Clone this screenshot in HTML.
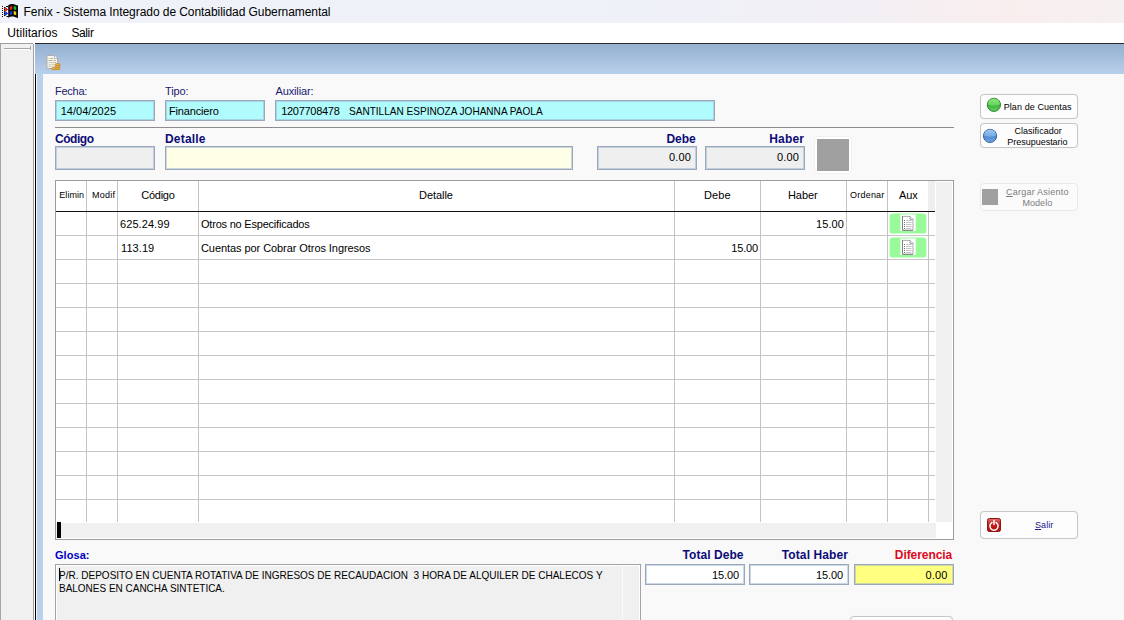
<!DOCTYPE html>
<html lang="es">
<head>
<meta charset="utf-8">
<title>Fenix - Sistema Integrado de Contabilidad Gubernamental</title>
<style>
*{box-sizing:border-box;margin:0;padding:0}
html,body{width:1124px;height:620px;overflow:hidden;background:#f9f9f9}
body{position:relative;font-family:"Liberation Sans",sans-serif;font-size:11px;color:#000}
.abs{position:absolute}
.t{white-space:nowrap;line-height:13px;font-size:11px}
#titlebar{left:0;top:0;width:1124px;height:23px;background:linear-gradient(90deg,#eff2f9 0%,#eff1f8 58%,#f2eff5 76%,#f9eeee 90%,#f6f0f1 100%)}
#menubar{left:0;top:23px;width:1124px;height:20px;background:#fff}
.f12{font-size:12px;line-height:15px}
#mdiline{left:0;top:43px;width:1124px;height:1px;background:linear-gradient(90deg,#a0a0a0 33px,#fff 33px,#fff 35px,#2b2b2b 35px)}
#leftpanel{left:0;top:44px;width:33px;height:576px;background:#f0f0f0;border-left:1px solid #a6a6a6}
#leftsep{left:4px;top:46px;width:27px;height:4px;border-right:1px solid #a8a8a8;background:linear-gradient(180deg,#f0f0f0 2px,#a6a6a6 2px,#a6a6a6 3px,#fff 3px)}
#leftedge{left:33px;top:44px;width:2px;height:576px;background:linear-gradient(90deg,#a0a0a0 50%,#fff 50%)}
#header{left:35px;top:44px;width:1089px;height:30px;background:linear-gradient(180deg,#95b0d0 0%,#a6bfdd 50%,#b5c9e5 80%,#b3d0ea 100%)}
#blueborder{left:35px;top:74px;width:8px;height:546px;background:#b9d1ea}
#blackline{left:35px;top:74px;width:2px;height:546px;background:linear-gradient(90deg,#000 50%,#f2f6fb 50%)}
#form{left:43px;top:74px;width:1081px;height:546px;background:#f9f9f9}
.lbl{color:#1a1a6e}
.lblb{font-weight:bold;color:#0c0c78;font-size:12px}
.fld{border:1px solid #9ca8b9;box-shadow:inset 0 0 0 1px rgba(150,175,205,.5)}
.cyan{background:#b0fbfb}
.gray{background:#efefef}
.white{background:#fff}
#hr{left:55px;top:127px;width:899px;height:1px;background:#8c8c8c}
#gridframe{left:55px;top:180px;width:899px;height:360px;border:1px solid #9c9c9c;background:#fff}
#vscroll{left:936px;top:182px;width:16px;height:340px;background:#f0f0f0}
#hscroll{left:56px;top:523px;width:880px;height:15px;background:#f0f0f0}
#marker{left:57px;top:522px;width:4px;height:16px;background:#000}
.vl{width:1px;top:181px;height:341px;background:#c3c3c3}
.hl{left:56px;width:879px;height:1px;background:#c5c5c5}
#hdrline{left:56px;top:211px;width:879px;height:1px;background:#111}
#hdrpad{left:928px;top:181px;width:7px;height:30px;background:#eeeeee}
.auxbtn{left:889.2px;width:37.3px;height:20.4px;background:#98fa98;border-radius:3.5px}
#glosa{left:55px;top:564px;width:586px;height:60px;border:1px solid #a3a3a3;background:#f0f0f0;box-shadow:inset 0 0 0 1px #fff}
#glosasep{left:622px;top:566px;width:1px;height:54px;background:#fafafa}
#caret{left:59px;top:568px;width:1px;height:13px;background:#000}
.btn{left:980px;width:98px;border:1px solid #c6c6c6;border-radius:4px;background:#fdfdfd;box-shadow:0 0 1px #e4e4e4}
.bt{font-size:9px;line-height:11px}
</style>
</head>
<body>
<div id="titlebar" class="abs"></div>
<div id="menubar" class="abs"></div>
<div class="abs t f12" id="t0" style="top:5px;letter-spacing:-0.06px;left:23.6px;">Fenix - Sistema Integrado de Contabilidad Gubernamental</div>
<div class="abs t f12" id="t1" style="top:26px;letter-spacing:0.08px;left:7.3px;">Utilitarios</div>
<div class="abs t f12" id="t2" style="top:26px;letter-spacing:-0.38px;left:71.4px;">Salir</div>
<div id="mdiline" class="abs"></div>
<div id="leftpanel" class="abs"></div>
<div id="leftsep" class="abs"></div>
<div id="leftedge" class="abs"></div>
<div id="header" class="abs"></div>
<div id="blueborder" class="abs"></div>
<div id="blackline" class="abs"></div>
<div id="form" class="abs"></div>
<div class="abs t lbl" id="t3" style="top:85px;letter-spacing:-0.24px;left:55px;">Fecha:</div>
<div class="abs t lbl" id="t4" style="top:85px;letter-spacing:-0.15px;left:165.1px;">Tipo:</div>
<div class="abs t lbl" id="t5" style="top:85px;letter-spacing:-0.14px;left:275.5px;">Auxiliar:</div>
<div class="abs fld cyan" style="left:55px;top:100px;width:100px;height:21px"></div>
<div class="abs fld cyan" style="left:165px;top:100px;width:100px;height:21px"></div>
<div class="abs fld cyan" style="left:275px;top:100px;width:440px;height:21px"></div>
<div class="abs t " id="t6" style="top:105px;letter-spacing:0.03px;left:60.7px;">14/04/2025</div>
<div class="abs t " id="t7" style="top:105px;letter-spacing:-0.16px;left:169px;">Financiero</div>
<div class="abs t " id="t8" style="top:105px;letter-spacing:-0.29px;left:281.2px;">1207708478</div>
<div class="abs t " id="t9" style="top:105px;transform:scaleX(0.9135);transform-origin:0 0;left:348.7px;">SANTILLAN ESPINOZA JOHANNA PAOLA</div>
<div id="hr" class="abs"></div>
<div class="abs t lblb" id="t10" style="top:133px;letter-spacing:-0.47px;left:55px;">Código</div>
<div class="abs t lblb" id="t11" style="top:133px;letter-spacing:0.18px;left:165px;">Detalle</div>
<div class="abs t lblb" id="t12" style="top:133px;letter-spacing:-0.01px;left:666.4px;">Debe</div>
<div class="abs t lblb" id="t13" style="top:133px;letter-spacing:0.16px;left:769.3px;">Haber</div>
<div class="abs fld gray" style="left:55px;top:146px;width:100px;height:24px"></div>
<div class="abs fld" style="left:165px;top:146px;width:408px;height:24px;background:#ffffe8"></div>
<div class="abs fld gray" style="left:597px;top:146px;width:100px;height:24px"></div>
<div class="abs fld gray" style="left:705px;top:146px;width:100px;height:24px"></div>
<div class="abs t " id="t14" style="top:151px;letter-spacing:0.14px;left:669px;">0.00</div>
<div class="abs t " id="t15" style="top:151px;letter-spacing:0.14px;left:777px;">0.00</div>
<div class="abs" style="left:814px;top:136px;width:38px;height:38px;background:#fff;border:1px solid #f1f1f1;border-radius:4px"></div>
<div class="abs" style="left:817px;top:139px;width:32px;height:32px;background:#a0a0a0"></div>
<div id="gridframe" class="abs"></div>
<div id="hdrpad" class="abs"></div>
<div id="vscroll" class="abs"></div>
<div id="hscroll" class="abs"></div>
<div id="marker" class="abs"></div>
<div class="abs vl" style="left:86px"></div>
<div class="abs vl" style="left:117px"></div>
<div class="abs vl" style="left:198px"></div>
<div class="abs vl" style="left:674px"></div>
<div class="abs vl" style="left:760px"></div>
<div class="abs vl" style="left:846px"></div>
<div class="abs vl" style="left:887px"></div>
<div class="abs vl" style="left:928px;top:212px;height:310px"></div>
<div class="abs hl" style="top:235px"></div>
<div class="abs hl" style="top:259px"></div>
<div class="abs hl" style="top:283px"></div>
<div class="abs hl" style="top:307px"></div>
<div class="abs hl" style="top:331px"></div>
<div class="abs hl" style="top:355px"></div>
<div class="abs hl" style="top:379px"></div>
<div class="abs hl" style="top:403px"></div>
<div class="abs hl" style="top:427px"></div>
<div class="abs hl" style="top:451px"></div>
<div class="abs hl" style="top:475px"></div>
<div class="abs hl" style="top:499px"></div>
<div id="hdrline" class="abs"></div>
<div class="abs t " id="t16" style="top:189px;font-size:9px;letter-spacing:0.06px;left:59.3px;">Elimin</div>
<div class="abs t " id="t17" style="top:189px;font-size:9px;letter-spacing:0.22px;left:92px;">Modif</div>
<div class="abs t " id="t18" style="top:189px;letter-spacing:-0.24px;left:141.2px;">Código</div>
<div class="abs t " id="t19" style="top:189px;letter-spacing:-0.05px;left:419px;">Detalle</div>
<div class="abs t " id="t20" style="top:189px;letter-spacing:0.08px;left:704px;">Debe</div>
<div class="abs t " id="t21" style="top:189px;letter-spacing:-0.07px;left:788px;">Haber</div>
<div class="abs t " id="t22" style="top:189px;font-size:9px;letter-spacing:0.22px;left:850px;">Ordenar</div>
<div class="abs t " id="t23" style="top:189px;letter-spacing:-0.12px;left:899px;">Aux</div>
<div class="abs t " id="t24" style="top:218px;letter-spacing:0.07px;left:120px;">625.24.99</div>
<div class="abs t " id="t25" style="top:218px;letter-spacing:-0.21px;left:201px;">Otros no Especificados</div>
<div class="abs t " id="t26" style="top:218px;letter-spacing:0.09px;left:816px;">15.00</div>
<div class="abs t " id="t27" style="top:242px;letter-spacing:0.08px;left:121px;">113.19</div>
<div class="abs t " id="t28" style="top:242px;letter-spacing:-0.07px;left:201px;">Cuentas por Cobrar Otros Ingresos</div>
<div class="abs t " id="t29" style="top:242px;letter-spacing:-0.19px;left:731.3px;">15.00</div>
<svg class="abs" style="left:888px;top:212px" width="40" height="23" viewBox="0 0 40 23"><rect x="1.600" y="1.400" width="36.800" height="20.200" rx="3.200" fill="#98fa98"/><rect x="12.400" y="2.500" width="15.400" height="16.500" fill="#fff"/><path d="M14.500 4.400h7.500l3 3v10.900h-10.500z" fill="#fff" stroke="#a2a2a2" stroke-width="0.900"/><path d="M14.500 4.400v13.900h10.500" fill="none" stroke="#7c7c7c" stroke-width="0.900"/><path d="M22 4.400v3h3" fill="#f4f4f4" stroke="#909090" stroke-width="0.800"/><path d="M18 8.500h5.600M18 10.500h5.600M18 12.500h5.600M18 14.500h5.600M18 16.500h5.600" stroke="#c8c8c8"/><path d="M16 8.500h1M16 10.500h1M16 12.500h1M16 14.500h1M16 16.500h1" stroke="#707070"/></svg>
<svg class="abs" style="left:888px;top:236px" width="40" height="23" viewBox="0 0 40 23"><rect x="1.600" y="1.400" width="36.800" height="20.200" rx="3.200" fill="#98fa98"/><rect x="12.400" y="2.500" width="15.400" height="16.500" fill="#fff"/><path d="M14.500 4.400h7.500l3 3v10.900h-10.500z" fill="#fff" stroke="#a2a2a2" stroke-width="0.900"/><path d="M14.500 4.400v13.900h10.500" fill="none" stroke="#7c7c7c" stroke-width="0.900"/><path d="M22 4.400v3h3" fill="#f4f4f4" stroke="#909090" stroke-width="0.800"/><path d="M18 8.500h5.600M18 10.500h5.600M18 12.500h5.600M18 14.500h5.600M18 16.500h5.600" stroke="#c8c8c8"/><path d="M16 8.500h1M16 10.500h1M16 12.500h1M16 14.500h1M16 16.500h1" stroke="#707070"/></svg>
<div class="abs t lblb" id="t30" style="top:549px;font-size:11px;letter-spacing:0.06px;left:55px;color:#0000c8">Glosa:</div>
<div id="glosa" class="abs"></div><div id="glosasep" class="abs"></div>
<div class="abs t " id="t31" style="top:569px;transform:scaleX(0.9102);transform-origin:0 0;left:59.3px;">P/R. DEPOSITO EN CUENTA ROTATIVA DE INGRESOS DE RECAUDACION&nbsp; 3 HORA DE ALQUILER DE CHALECOS Y</div>
<div class="abs t " id="t32" style="top:582px;transform:scaleX(0.9072);transform-origin:0 0;left:59.3px;">BALONES EN CANCHA SINTETICA.</div>
<div id="caret" class="abs"></div>
<div class="abs t lblb" id="t33" style="top:549px;letter-spacing:0.06px;left:682.5px;">Total Debe</div>
<div class="abs t lblb" id="t34" style="top:549px;letter-spacing:0.10px;left:781.8px;">Total Haber</div>
<div class="abs t lblb" id="t35" style="top:549px;letter-spacing:-0.07px;left:894.8px;color:#dc0a1e">Diferencia</div>
<div class="abs fld white" style="left:645px;top:564px;width:100px;height:21px"></div>
<div class="abs fld white" style="left:749px;top:564px;width:100px;height:21px"></div>
<div class="abs fld" style="left:854px;top:564px;width:100px;height:21px;background:#ffff80"></div>
<div class="abs t " id="t36" style="top:569px;letter-spacing:-0.09px;left:712px;">15.00</div>
<div class="abs t " id="t37" style="top:569px;letter-spacing:-0.09px;left:816px;">15.00</div>
<div class="abs t " id="t38" style="top:569px;letter-spacing:0.17px;left:925.5px;">0.00</div>
<div class="abs btn" style="left:850px;width:103px;top:616px;height:20px"></div>
<div class="abs btn" style="top:94px;height:25px"></div>
<svg class="abs" style="left:984px;top:95px" width="18" height="18" viewBox="0 0 18 18"><defs><linearGradient id="gga" x1="0" y1="0" x2="0" y2="1"><stop offset="0" stop-color="#8ce67c"/><stop offset="1" stop-color="#62d258"/></linearGradient><linearGradient id="ggb" x1="0" y1="0" x2="0" y2="1"><stop offset="0.4" stop-color="#36a83a"/><stop offset="1" stop-color="#62d258"/></linearGradient></defs><g transform="translate(9.90 9.80)"><circle cx="0" cy="0" r="6.600" fill="url(#ggb)" stroke="#2a8230" stroke-width="1"/><path d="M-6.100 -0.300A6.100 6.100 0 0 1 6.100 -0.300Q0 2.200 -6.100 -0.300z" fill="url(#gga)"/></g></svg>
<div class="abs t bt" id="t39" style="top:102px;letter-spacing:0.09px;left:1003.7px;">Plan de Cuentas</div>
<div class="abs btn" style="top:123px;height:25px"></div>
<svg class="abs" style="left:981px;top:126px" width="18" height="18" viewBox="0 0 18 18"><defs><linearGradient id="gba" x1="0" y1="0" x2="0" y2="1"><stop offset="0" stop-color="#9ec8f4"/><stop offset="1" stop-color="#72a8e4"/></linearGradient><linearGradient id="gbb" x1="0" y1="0" x2="0" y2="1"><stop offset="0.4" stop-color="#4682c8"/><stop offset="1" stop-color="#72a8e4"/></linearGradient></defs><g transform="translate(9.05 9.90)"><circle cx="0" cy="0" r="6.600" fill="url(#gbb)" stroke="#34649e" stroke-width="1"/><path d="M-6.100 -0.300A6.100 6.100 0 0 1 6.100 -0.300Q0 2.200 -6.100 -0.300z" fill="url(#gba)"/></g></svg>
<div class="abs t bt" id="t40" style="top:126px;letter-spacing:0.02px;left:1014.5px;">Clasificador</div>
<div class="abs t bt" id="t41" style="top:137px;letter-spacing:-0.02px;left:1007.3px;">Presupuestario</div>
<div class="abs btn" style="top:183px;height:28px;border-color:#e9e9e9;background:#fbfbfb;box-shadow:none"></div>
<div class="abs" style="left:982px;top:189px;width:16px;height:16px;background:#a0a0a0"></div>
<div class="abs t bt" id="t42" style="top:187px;letter-spacing:0.22px;left:1006px;color:#7c7c7c"><u>C</u>argar Asiento</div>
<div class="abs t bt" id="t43" style="top:198px;letter-spacing:0.06px;left:1022.4px;color:#7c7c7c">Modelo</div>
<div class="abs btn" style="top:511px;height:28px"></div>
<svg class="abs" style="left:987px;top:518px" width="14" height="14" viewBox="0 0 14 14"><defs><linearGradient id="gr" x1="0" y1="0" x2="0" y2="1"><stop offset="0" stop-color="#e27070"/><stop offset="0.45" stop-color="#c62020"/><stop offset="1" stop-color="#b00c0c"/></linearGradient></defs><rect x="0.5" y="0.5" width="13" height="13" rx="1.8" fill="url(#gr)" stroke="#941414"/><path d="M4.9 4.6a4.1 4.1 0 1 0 4.2 0" fill="none" stroke="#fff" stroke-width="1.5" stroke-linecap="round"/><path d="M7 2.4v4" stroke="#fff" stroke-width="1.5" stroke-linecap="round"/></svg>
<div class="abs t bt" id="t44" style="top:520px;letter-spacing:0.07px;left:1035px;color:#1a1a8c"><u>S</u>alir</div>
<svg class="abs" style="left:46px;top:54px" width="15" height="17" viewBox="0 0 15 17"><path d="M1 1.5h7.5l3 3v10h-10.5z" fill="#f6f5ee" stroke="#a9a9a0" stroke-width="0.9"/><path d="M8.5 1.5v3h3" fill="#fff" stroke="#a9a9a0" stroke-width="0.8"/><path d="M2.5 4.5h1M4.5 4.5h3M2.5 6.5h4M7.5 6.5h2.5M2.5 8.5h1M4.5 8.5h2M7.5 8.5h2.5" stroke="#b7b4a2"/><rect x="3" y="10.2" width="6" height="2.6" fill="#ecebe2" stroke="#c2c0b2" stroke-width="0.6"/><g fill="#f0b83c" stroke="#b8801c" stroke-width="0.7"><rect x="9.3" y="9.7" width="4.6" height="1.9" rx="0.9"/><rect x="9.3" y="11.7" width="4.6" height="1.9" rx="0.9"/><rect x="9.3" y="13.7" width="4.6" height="1.9" rx="0.9"/><rect x="5.6" y="13.7" width="4.2" height="1.9" rx="0.9"/></g></svg>
<svg class="abs" style="left:1px;top:3px" width="18" height="16" viewBox="0 0 18 16"><path d="M7.200 2.200c2.600-1.900 5.200-1.700 9.800 0.400v12.600c-4.400-2-7-2.200-9.800-0.400z" fill="#0a0a0a"/><path d="M8.900 3.700c.8-.5 1.500-.7 2.300-.7v3.300c-.8 0-1.500.2-2.300.7z" fill="#e8281c"/><path d="M12.700 3.100c.8.1 1.600.4 2.500.8v3.300c-.9-.4-1.700-.7-2.500-.8z" fill="#22b422"/><path d="M8.900 8.700c.8-.5 1.500-.7 2.300-.7v3.300c-.8 0-1.500.2-2.300.7z" fill="#1c38e0"/><path d="M12.700 8.100c.8.1 1.600.4 2.500.8v3.300c-.9-.4-1.700-.7-2.500-.8z" fill="#f0d020"/><path d="M1 3.500h1M1 5.500h1M1 7.500h1M1 9.500h1M1 11.500h1M1 13.500h1M3 4.500h1.500M3 6.500h1.500M3 8.500h1.500M3 10.500h1.500M3 12.500h1.500M5 3.500h2M5.500 13.500h2" stroke="#0a0a0a"/><path d="M3 5.500h3M4.500 6.500h2.500M3 7.500h3" stroke="#e8281c"/><path d="M3 9.500h3M4.500 10.500h2.500M3 11.500h3" stroke="#1c38e0"/></svg>
</body>
</html>
